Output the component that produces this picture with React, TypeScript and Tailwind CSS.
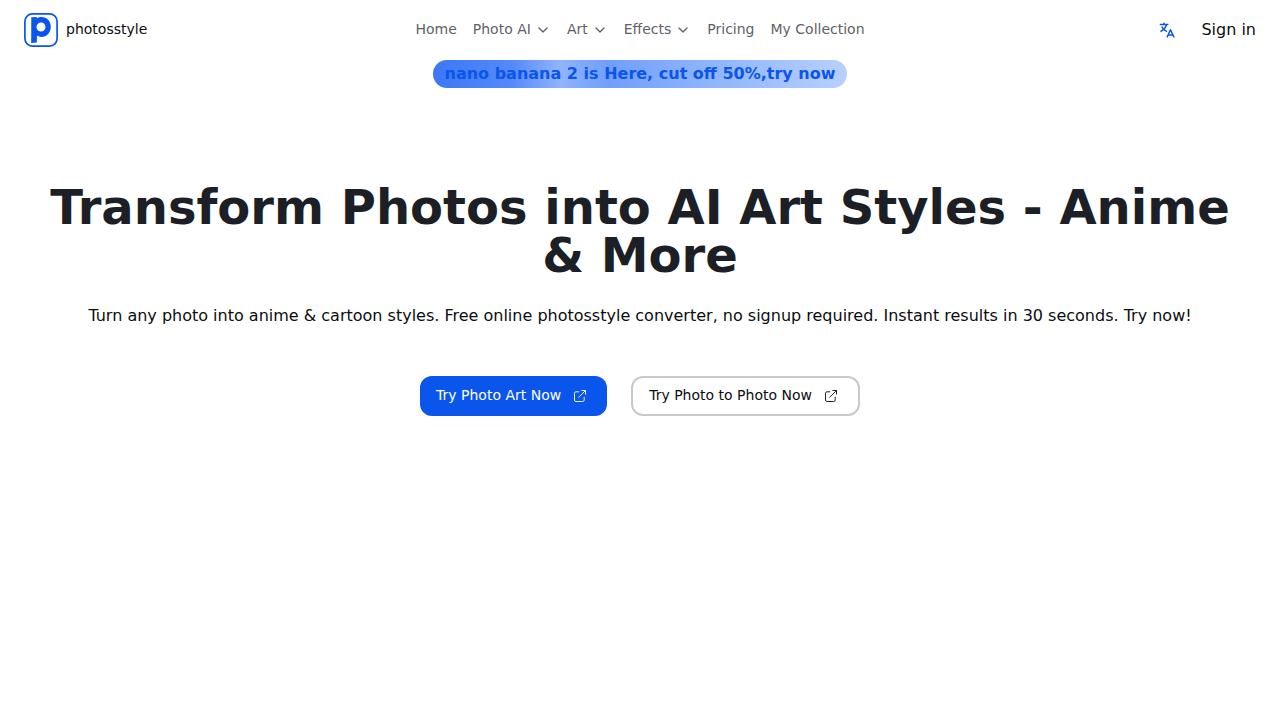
import { LuChevronDown } from "react-icons/lu";

const navItems = [
  { label: "Home", hasMenu: false },
  { label: "Photo AI", hasMenu: true },
  { label: "Art", hasMenu: true },
  { label: "Effects", hasMenu: true },
  { label: "Pricing", hasMenu: false },
  { label: "My Collection", hasMenu: false },
];

export default function App() {
  return (
    <div className="min-h-screen bg-white font-['DejaVu_Sans',sans-serif] text-[#0b0d10]">
      <Header />
      <PromoBanner />
      <Hero />
    </div>
  );
}

function Header() {
  return (
    <header className="flex h-15 items-center px-6">
      {/* Left side - Brand */}
      <div className="flex flex-1 items-center">
        <a href="#" className="flex items-center gap-2 text-sm">
          <Logo />
          <span className="pb-0.5">photosstyle</span>
        </a>
      </div>

      {/* Center - Navigation */}
      <nav className="flex items-center gap-4 text-sm text-[#5f5f69]">
        {navItems.map((item) =>
          item.hasMenu ? (
            <button key={item.label} type="button" className="flex items-center gap-1">
              <span className="pb-0.5">{item.label}</span>
              <LuChevronDown className="h-4 w-4" />
            </button>
          ) : (
            <a key={item.label} href="#" className="pb-0.5">
              {item.label}
            </a>
          )
        )}
      </nav>

      {/* Right side - Language & Sign in */}
      <div className="flex flex-1 items-center justify-end gap-4">
        <button type="button" aria-label="Change language" className="px-2.5 text-[#0a55eb]">
          <TranslateIcon />
        </button>
        <a href="#" className="text-base">
          Sign in
        </a>
      </div>
    </header>
  );
}

function PromoBanner() {
  return (
    <div className="flex justify-center">
      <a
        href="#"
        className="relative overflow-hidden rounded-full bg-linear-to-r from-[#3c77f6] to-[#b8d0fd] px-3 py-0.5 font-bold text-[#0a55eb]"
      >
        {/* Shimmer that sweeps over the pill */}
        <span className="absolute inset-y-0 left-20 w-24 bg-linear-to-r from-transparent via-white/30 to-transparent" />
        <span className="relative">nano banana 2 is Here, cut off 50%,try now</span>
      </a>
    </div>
  );
}

function Hero() {
  return (
    <main className="flex flex-col items-center px-6 pt-[95px] text-center">
      <h1 className="text-5xl leading-none font-bold text-[#1c1f26]">
        Transform Photos into AI Art Styles - Anime & More
      </h1>
      <p className="mt-[25px] text-base">
        Turn any photo into anime & cartoon styles. Free online photosstyle converter, no signup
        required. Instant results in 30 seconds. Try now!
      </p>
      <div className="mt-12 flex gap-6">
        <a
          href="#"
          className="flex h-10 items-center gap-2 rounded-xl bg-[#0a55eb] px-4 text-sm text-white"
        >
          <span className="pb-0.5">Try Photo Art Now</span>
          <ExternalIcon />
        </a>
        <a
          href="#"
          className="flex h-10 items-center gap-2 rounded-xl border-2 border-[#c8c8cd] px-4 text-sm"
        >
          <span className="pb-0.5">Try Photo to Photo Now</span>
          <ExternalIcon />
        </a>
      </div>
    </main>
  );
}

function TranslateIcon() {
  return (
    <svg
      viewBox="0 0 16 16"
      className="h-4 w-4"
      fill="none"
      stroke="currentColor"
      strokeWidth="1.5"
      strokeLinejoin="round"
    >
      <path d="M.8 2.600h8.600M5 .8v1.800M7.500 2.800C6.700 5.700 4.600 8 1.500 9.500M2.600 4.500C3.900 6.900 5.600 8.400 8 9.600" />
      <path d="m8 15.400 3.500-7.700L15 15.400M9.300 12.900h4.400" />
    </svg>
  );
}

function ExternalIcon() {
  return (
    <svg
      viewBox="0 0 22 22"
      className="h-[22px] w-[22px]"
      fill="none"
      stroke="currentColor"
      strokeWidth="0.9"
      strokeLinecap="round"
      strokeLinejoin="round"
    >
      <path d="M9.8 6.8H7A1.5 1.5 0 0 0 5.5 8.3V15A1.5 1.5 0 0 0 7 16.5h6.7A1.5 1.5 0 0 0 15.2 15v-2.8" />
      <path d="M12.8 5.5h3.7v3.7M16.4 5.6 9.8 12.2" />
    </svg>
  );
}

function Logo() {
  return (
    <svg viewBox="0 0 34 34" className="h-[34px] w-[34px]" fill="none">
      <rect x="0.9" y="0.9" width="32.2" height="32.2" rx="7.5" stroke="#0a55eb" strokeWidth="1.7" />
      <path
        fill="#0a55eb"
        fillRule="evenodd"
        d="M7.3 4.2 12.8 4v1.4C14 4.4 15.7 4 17.5 4c5.3 0 9.3 4.200 9.300 9.700 0 5.800-4 10.300-9.300 10.300-1.800 0-3.300-.5-4.500-1.400l-.2 6.800-5.600.6ZM17 9.500a4.500 4.500 0 1 0 0 9 4.500 4.500 0 0 0 0-9Z"
      />
    </svg>
  );
}
